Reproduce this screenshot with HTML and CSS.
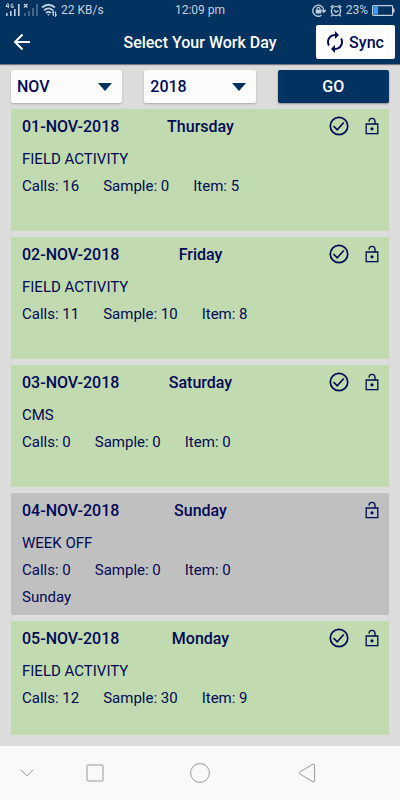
FILE: index.html
```
<!DOCTYPE html>
<html lang="en">
<head>
    <meta charset="UTF-8">
    <meta name="viewport" content="width=device-width, initial-scale=1.0">
    <title>Select Your Work Day</title>
    <link rel="stylesheet" href="styles.css">
</head>
<body>
    <!-- icons used in every card -->
    <svg class="defs" aria-hidden="true">
        <symbol id="check" viewBox="0 0 20 20">
            <circle cx="10" cy="10" r="8.7" fill="none" stroke="currentColor" stroke-width="1.7"/>
            <path d="M4.500 10l3.700 3.800 6.600-7.300" fill="none" stroke="currentColor" stroke-width="1.600"/>
        </symbol>
        <symbol id="lock" viewBox="0 0 14 18">
            <path d="M1.200 7h11.600v9.600H1.200zM4 4.400a3 3 0 0 1 6 0V7" fill="none" stroke="currentColor" stroke-width="1.300"/>
            <circle cx="7" cy="11.800" r="1.600" fill="currentColor"/>
        </symbol>
    </svg>

    <header class="top">
        <div class="status">
            <div class="status-left">
                <svg width="52" height="14" viewBox="0 0 52 14" fill="none" stroke="#c3cfdc" aria-hidden="true">
                    <path d="M2.500.5L1 3.500h3M3.300.5v4.500M8.200 1.200H7a1 1 0 0 0-1 1v1.300a1 1 0 0 0 1 1h1.200V3H7.200" stroke-width="1"/>
                    <path d="M1.800 10v3M5.800 8v5M9.800 6v7M13.800 1v12" stroke-width="1.600"/>
                    <path d="M19 1l3.500 3.500M22.500 1L19 4.500" stroke-width="1.400"/>
                    <path d="M20 10v3M24 8v5M28 5v8M32 1v12" stroke="#5f7d9b" stroke-width="1.400"/>
                    <path d="M37 4.500q6.500-5.500 13 0M39 7.300q4.500-3.800 9 0M41 9.800q2.500-2 5 0" stroke-width="1.700"/>
                    <path d="M42 11h3l-1.500 1.800z" fill="#c3cfdc" stroke="none"/>
                    <path d="M48.300 13V8.500l-1.200 1.500M50.500 8.500V13l1.200-1.500" stroke-width="1.200"/>
                </svg>
                <span>22 KB/s</span>
            </div>
            <span>12:09 pm</span>
            <div class="status-right">
                <svg width="14" height="13" viewBox="0 0 14 13" fill="none" stroke="#c3cfdc" aria-hidden="true">
                    <path d="M9.500 11.200a5.500 5.500 0 1 1 2.300-4.500M9.500 6l2.300 2.200L13.800 6" stroke-width="1.300"/>
                    <path d="M3.700 5.800h5.600v3.700H3.700z" fill="#c3cfdc" stroke="none"/>
                    <path d="M5 6V4.800a1.500 1.500 0 0 1 3 0V6" stroke-width="1.200"/>
                </svg>
                <svg width="12" height="13" viewBox="0 0 12 13" fill="none" stroke="#c3cfdc" stroke-width="1.400" aria-hidden="true">
                    <circle cx="6" cy="7" r="4.600"/>
                    <path d="M.6 3.400L3.400 1M8.600 1l2.800 2.400M4 6l2 2 2.500-1.500M2.500 10.800L1.200 12.400M9.500 10.800l1.300 1.600"/>
                </svg>
                <span>23%</span>
                <svg width="23" height="11" viewBox="0 0 23 11" aria-hidden="true">
                    <rect x=".6" y=".6" width="20" height="9.800" rx="1" fill="none" stroke="#c3cfdc" stroke-width="1.200"/>
                    <path d="M1.500 1.500H6v8H1.500z" fill="#35a0f2"/>
                    <path d="M21 3.500h1.500v4H21z" fill="#c3cfdc"/>
                </svg>
            </div>
        </div>
        <div class="appbar">
            <button class="back" aria-label="Back">
                <svg width="18" height="18" viewBox="0 0 18 18" fill="none" stroke="#fff" stroke-width="2" aria-hidden="true">
                    <path d="M17 9H2M9.500 1.500L2 9l7.500 7.500"/>
                </svg>
            </button>
            <h1>Select Your Work Day</h1>
            <button class="sync">
                <svg width="16" height="22" viewBox="4 1 16 22" fill="currentColor" aria-hidden="true">
                    <path d="M12 6v3l4-4-4-4v3c-4.420 0-8 3.580-8 8 0 1.570.46 3.030 1.240 4.260L6.700 14.800c-.45-.83-.7-1.790-.7-2.800 0-3.310 2.690-6 6-6zm6.760 1.740L17.300 9.200c.44.84.7 1.790.7 2.800 0 3.310-2.690 6-6 6v-3l-4 4 4 4v-3c4.420 0 8-3.580 8-8 0-1.570-.46-3.030-1.240-4.260z"/>
                </svg>
                Sync
            </button>
        </div>
    </header>

    <main>
        <form class="filters">
            <select aria-label="Month">
                <option>NOV</option>
            </select>
            <select aria-label="Year">
                <option>2018</option>
            </select>
            <button type="button" class="go">GO</button>
        </form>

        <div class="days">
            <section class="day">
                <div class="day-head">
                    <span>01-NOV-2018</span>
                    <h2>Thursday</h2>
                    <div class="icons">
                        <svg class="check"><use href="#check"/></svg>
                        <svg class="lock"><use href="#lock"/></svg>
                    </div>
                </div>
                <p>FIELD ACTIVITY</p>
                <p class="counts"><span>Calls: 16</span><span>Sample: 0</span><span>Item: 5</span></p>
            </section>
            <section class="day">
                <div class="day-head">
                    <span>02-NOV-2018</span>
                    <h2>Friday</h2>
                    <div class="icons">
                        <svg class="check"><use href="#check"/></svg>
                        <svg class="lock"><use href="#lock"/></svg>
                    </div>
                </div>
                <p>FIELD ACTIVITY</p>
                <p class="counts"><span>Calls: 11</span><span>Sample: 10</span><span>Item: 8</span></p>
            </section>
            <section class="day">
                <div class="day-head">
                    <span>03-NOV-2018</span>
                    <h2>Saturday</h2>
                    <div class="icons">
                        <svg class="check"><use href="#check"/></svg>
                        <svg class="lock"><use href="#lock"/></svg>
                    </div>
                </div>
                <p>CMS</p>
                <p class="counts"><span>Calls: 0</span><span>Sample: 0</span><span>Item: 0</span></p>
            </section>
            <section class="day off">
                <div class="day-head">
                    <span>04-NOV-2018</span>
                    <h2>Sunday</h2>
                    <div class="icons">
                        <svg class="lock"><use href="#lock"/></svg>
                    </div>
                </div>
                <p>WEEK OFF</p>
                <p class="counts"><span>Calls: 0</span><span>Sample: 0</span><span>Item: 0</span></p>
                <p>Sunday</p>
            </section>
            <section class="day">
                <div class="day-head">
                    <span>05-NOV-2018</span>
                    <h2>Monday</h2>
                    <div class="icons">
                        <svg class="check"><use href="#check"/></svg>
                        <svg class="lock"><use href="#lock"/></svg>
                    </div>
                </div>
                <p>FIELD ACTIVITY</p>
                <p class="counts"><span>Calls: 12</span><span>Sample: 30</span><span>Item: 9</span></p>
            </section>
        </div>
    </main>

    <nav class="navbar">
        <button aria-label="Hide">
            <svg width="14" height="8" viewBox="0 0 14 8"><path d="M1 .8l6 6 6-6"/></svg>
        </button>
        <button aria-label="Recent apps">
            <svg width="18" height="18" viewBox="0 0 18 18"><rect x="1" y="1" width="16" height="16" rx="1"/></svg>
        </button>
        <button aria-label="Home">
            <svg width="20" height="20" viewBox="0 0 20 20"><circle cx="10" cy="10" r="9.400"/></svg>
        </button>
        <button aria-label="Back">
            <svg width="18" height="20" viewBox="0 0 18 20"><path d="M1.500 9.200L15 1.200q1.600-.7 1.600 1v15.600q0 1.700-1.600 1L1.500 10.800q-1-.8 0-1.600z"/></svg>
        </button>
    </nav>
</body>
</html>
```
FILE: styles.css
```
* {
    box-sizing: border-box;
}
body {
    font-family: Roboto, sans-serif;
    font-size: 15px;
    color: #020a55;
    background-color: #dcdcdc;
    margin: 0;
    height: 100vh;
    display: flex;
    flex-direction: column;
}
h1, h2, p {
    margin: 0;
}
h1, h2 {
    font-size: 16px;
    font-weight: 500;
}
p {
    font-size: 15px;
}
button, select {
    font-family: inherit;
    font-size: 16px;
    font-weight: 500;
    border: none;
    padding: 0;
    cursor: pointer;
}
svg {
    display: block;
    flex: none;
}
.defs {
    position: absolute;
    width: 0;
    height: 0;
}

/* status bar and title */
.top {
    background-color: #013260;
    box-shadow: 0 1px 1px #777985;
}
.status {
    display: grid;
    grid-template-columns: 1fr auto 1fr;
    align-items: center;
    height: 20px;
    padding: 0 5px;
    font-size: 12px;
    color: #c3cfdc;
}
.status-left, .status-right {
    display: flex;
    align-items: center;
    gap: 4px;
}
.status-right {
    justify-content: flex-end;
}
.appbar {
    display: grid;
    grid-template-columns: 1fr auto 1fr;
    align-items: center;
    height: 44px;
    padding: 0 5px;
}
.appbar h1 {
    color: #fff;
}
.back {
    justify-self: start;
    background: none;
    padding: 8px;
}
.sync {
    justify-self: end;
    display: flex;
    align-items: center;
    justify-content: center;
    gap: 6px;
    width: 79px;
    height: 34px;
    color: #020a55;
    background-color: #fff;
    border-radius: 2px;
}

main {
    flex: 1;
    min-height: 0;
    display: flex;
    flex-direction: column;
    gap: 6px;
    padding: 6px 11px 11px;
}
.filters {
    display: grid;
    grid-template-columns: repeat(3, 1fr);
    gap: 22px;
    height: 33px;
    flex: none;
}
.filters select {
    appearance: none;
    padding: 0 6px;
    color: #020a55;
    background: #fcfcfc url("data:image/svg+xml,%3Csvg xmlns='http://www.w3.org/2000/svg' width='14' height='8'%3E%3Cpath d='M0 0h14L7 8z' fill='%23013260'/%3E%3C/svg%3E") no-repeat right 10px center;
    border-radius: 2px;
    box-shadow: 0 1px 2px #aaa;
}
.go {
    color: #fff;
    background-color: #013260;
    border-radius: 2px;
    box-shadow: 0 1px 2px #888;
}

/* list of days */
.days {
    flex: 1;
    min-height: 0;
    overflow: hidden;
}
.day {
    min-height: 122px;
    margin-bottom: 6px;
    padding: 3px 10px 3px 11px;
    background-color: #c1dab0;
    border-radius: 1px;
}
.day.off {
    background-color: #c0c0c0;
}
.day-head {
    display: grid;
    grid-template-columns: 1fr auto 1fr;
    align-items: center;
    height: 28px;
    margin-bottom: 6px;
    font-size: 16px;
    font-weight: 500;
}
.day p {
    line-height: 27px;
}
.icons {
    display: flex;
    align-items: center;
    justify-content: flex-end;
    gap: 16px;
}
.check {
    width: 20px;
    height: 20px;
}
.lock {
    width: 14px;
    height: 18px;
}
.counts {
    display: flex;
    gap: 24px;
}

/* phone navigation keys */
.navbar {
    display: grid;
    grid-template-columns: 54fr 81fr 130fr 84fr 51fr;
    height: 54px;
    flex: none;
    background-color: #f9f9f9;
}
.navbar button {
    display: flex;
    align-items: center;
    justify-content: center;
    background: none;
}
.navbar svg {
    fill: none;
    stroke: #999;
    stroke-width: 1;
}
```
